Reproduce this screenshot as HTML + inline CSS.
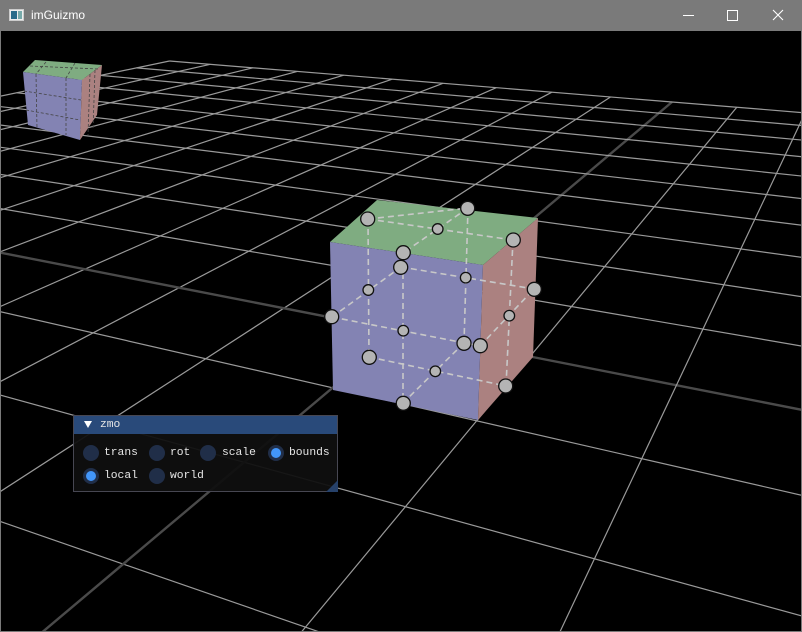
<!DOCTYPE html>
<html><head><meta charset="utf-8">
<style>
*{margin:0;padding:0;box-sizing:border-box}
html,body{width:802px;height:632px;overflow:hidden}
body{background:#000;font-family:"Liberation Sans",sans-serif;position:relative}
#tb{position:absolute;left:0;top:0;width:802px;height:31px;background:#7a7a7a;color:#fff;font-size:12px}
#frame{position:absolute;left:0;top:31px;width:802px;height:601px;border:1px solid #7a7a7a;border-top:none}
svg{position:absolute;left:0;top:0}
#panel{position:absolute;left:73px;top:415px;width:265px;height:77px;border:1px solid rgba(110,110,128,0.6);background:rgba(15,15,15,0.94);font-family:"Liberation Mono",monospace;font-size:11.3px;color:#e6e6e6}
#ph{height:18px;background:#294a7a;position:relative}
.r{position:absolute;width:16px;height:16px;border-radius:50%;background:#202e48}
.r.on::after{content:"";position:absolute;left:3px;top:3px;width:10px;height:10px;border-radius:50%;background:#4296fa}
.t{position:absolute;line-height:14px}
</style></head><body>
<svg width="802" height="632" id="g"></svg>
<div id="frame"></div>
<div id="tb">
 <svg width="802" height="31" style="position:absolute;left:0;top:0">
  <rect x="9.5" y="9.5" width="14" height="11" fill="#eee" stroke="#ccc"/>
  <rect x="11" y="11" width="6" height="8" fill="#2a6b8a"/>
  <rect x="18" y="11" width="4" height="8" fill="#7aa"/>
  <line x1="683" y1="15.5" x2="694" y2="15.5" stroke="#fff"/>
  <rect x="727.5" y="10.5" width="10" height="10" fill="none" stroke="#fff"/>
  <path d="M773 10 L783 20 M783 10 L773 20" stroke="#fff" stroke-width="1.1"/>
 </svg>
 <span style="position:absolute;left:31px;top:8px">imGuizmo</span>
</div>
<div id="panel">
 <div id="ph"><svg width="20" height="18" style="left:6px;top:0"><path d="M4 5 L12 5 L8 12 Z" fill="#fff"/></svg><span class="t" style="left:26px;top:2px">zmo</span></div>
 <div class="r" style="left:9px;top:29px"></div><span class="t" style="left:30px;top:30px">trans</span>
 <div class="r" style="left:75px;top:29px"></div><span class="t" style="left:96px;top:30px">rot</span>
 <div class="r" style="left:126px;top:29px"></div><span class="t" style="left:148px;top:30px">scale</span>
 <div class="r on" style="left:194px;top:29px"></div><span class="t" style="left:215px;top:30px">bounds</span>
 <div class="r on" style="left:9px;top:52px"></div><span class="t" style="left:30px;top:53px">local</span>
 <div class="r" style="left:75px;top:52px"></div><span class="t" style="left:96px;top:53px">world</span>
 <svg width="12" height="12" style="left:252px;top:64px"><path d="M12 0 L12 12 L0 12 Z" fill="#26416a"/></svg>
</div>
<script>
(function(){
var src=[[-10,10],[0,10],[0,0],[1,0]],dst=[[169.5,61],[672,102],[400,331],[530,356.5]];
var A=[],B=[];
for(var i=0;i<4;i++){var u=src[i][0],v=src[i][1],x=dst[i][0],y=dst[i][1];
A.push([u,v,1,0,0,0,-u*x,-v*x]);B.push(x);A.push([0,0,0,u,v,1,-u*y,-v*y]);B.push(y);}
for(var c=0;c<8;c++){var p=c;for(var r=c+1;r<8;r++)if(Math.abs(A[r][c])>Math.abs(A[p][c]))p=r;
var t=A[c];A[c]=A[p];A[p]=t;t=B[c];B[c]=B[p];B[p]=t;
for(var r=0;r<8;r++){if(r==c)continue;var f=A[r][c]/A[c][c];for(var k=c;k<8;k++)A[r][k]-=f*A[c][k];B[r]-=f*B[c];}}
var h=[];for(var i=0;i<8;i++)h.push(B[i]/A[i][i]);
function P(u,v){var w=h[6]*u+h[7]*v+1;return [(h[0]*u+h[1]*v+h[2])/w,(h[3]*u+h[4]*v+h[5])/w,w];}
var s='';
function seg(fx,axis){var t0=-10,t1=10,e=0.02;
var w0=fx(t0)[2],w1=fx(t1)[2];
if(w0<e&&w1<e)return;
if(w0<e){t0=t0+(e-w0)/(w1-w0)*(t1-t0);}
if(w1<e){var wa=fx(t0)[2];t1=t0+(e-wa)/(w1-wa)*(t1-t0);}
var a=fx(t0),b=fx(t1);
s+='<line x1="'+a[0].toFixed(1)+'" y1="'+a[1].toFixed(1)+'" x2="'+b[0].toFixed(1)+'" y2="'+b[1].toFixed(1)+'" stroke="'+(axis?'#4a4a4a':'#9a9a9a')+'" stroke-width="'+(axis?2.4:1.2)+'"/>';}
for(var k=-10;k<=10;k++){(function(k){
seg(function(t){return P(k,t)},k==0);
seg(function(t){return P(t,k)},k==0);})(k);}
var cube='<polygon points="330,242 377,200 538,218 483,265" fill="#7fac81"/>'+
'<polygon points="330,242 483,265 478,420 333,390" fill="#8383b3"/>'+
'<polygon points="483,265 538,218 533,357 478,420" fill="#ab8180"/>';
var sc='<polygon points="23,72 35,60 102,65 82,80" fill="#7fac81"/>'+
'<polygon points="23,72 82,80 80,140 28,125" fill="#8383b3"/>'+
'<polygon points="82,80 102,65 97,115 80,140" fill="#ab8180"/>'+
'<g stroke="#444" stroke-dasharray="3 2" stroke-width="0.8" fill="none"><path d="M36,74 L37,129 M66,78 L66,135 M24,91 L81,100 M26,110 L80,120 M46,62 L36,74 M75,63 L66,78 M90,74 L88,135 M95,70 L93,130 M30,66 L98,69"/></g>';
var dl=[[368,219,513,240],[468,208,403,253],[368,219,369,357],[468,208,464,343],[403,253,403,403],[513,240,506,386],[332,317,480,346],[401,267,534,289],[332,317,401,267],[480,346,534,289],[369,357,506,386],[464,343,403,403],[368,219,468,208]];
var d='<g stroke="#c8c8c8" stroke-width="1.6" stroke-dasharray="6 4">';
dl.forEach(function(l){d+='<line x1="'+l[0]+'" y1="'+l[1]+'" x2="'+l[2]+'" y2="'+l[3]+'"/>';});d+='</g>';
var cs=[[367.7,219,1],[467.7,208.3,1],[437.7,229,0],[513.3,240,1],[403.3,252.7,1],[400.7,267.3,1],[465.7,277.7,0],[534.3,289.3,1],[368.3,290,0],[509.3,315.7,0],[331.7,316.7,1],[403.3,330.7,0],[464,343.3,1],[480.3,345.7,1],[369.3,357.3,1],[435.3,371.3,0],[505.7,386,1],[403.3,403.3,1]];
var c='';cs.forEach(function(q){c+='<circle cx="'+q[0]+'" cy="'+q[1]+'" r="'+(q[2]?7:5.3)+'" fill="#b4b4b4" stroke="#111" stroke-width="1.3"/>';});
document.getElementById('g').innerHTML=s+sc+cube+d+c;
})();
</script>
</body></html>
